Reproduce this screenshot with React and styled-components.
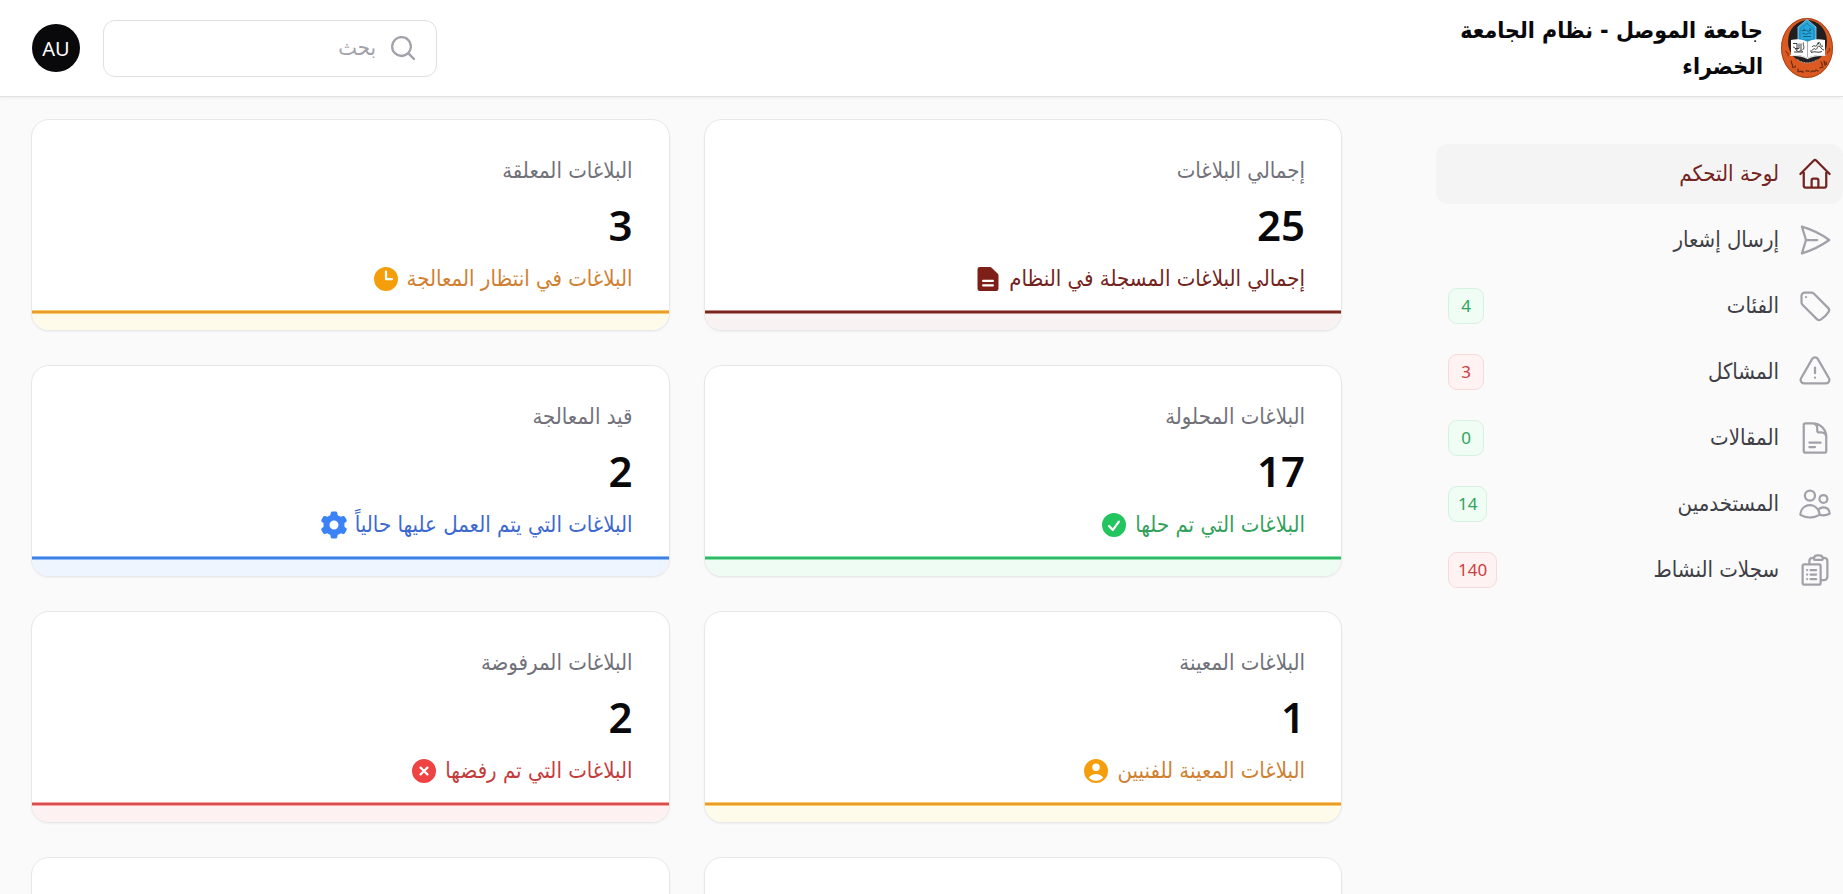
import styled, { createGlobalStyle } from "styled-components";
import {
  HiOutlineHome,
  HiOutlinePaperAirplane,
  HiOutlineTag,
  HiOutlineExclamationTriangle,
  HiOutlineDocumentText,
  HiOutlineUsers,
  HiOutlineClipboardDocumentList,
  HiMiniMagnifyingGlass,
  HiMiniDocumentText,
  HiMiniClock,
  HiMiniCheckCircle,
  HiMiniCog6Tooth,
  HiMiniUserCircle,
  HiMiniXCircle,
} from "react-icons/hi2";

const navItems = [
  { label: "لوحة التحكم", icon: HiOutlineHome, active: true },
  { label: "إرسال إشعار", icon: HiOutlinePaperAirplane },
  { label: "الفئات", icon: HiOutlineTag, count: 4, tone: "green" },
  { label: "المشاكل", icon: HiOutlineExclamationTriangle, count: 3, tone: "red" },
  { label: "المقالات", icon: HiOutlineDocumentText, count: 0, tone: "green" },
  { label: "المستخدمين", icon: HiOutlineUsers, count: 14, tone: "green" },
  { label: "سجلات النشاط", icon: HiOutlineClipboardDocumentList, count: 140, tone: "red" },
];

const stats = [
  { label: "إجمالي البلاغات", value: 25, note: "إجمالي البلاغات المسجلة في النظام", icon: HiMiniDocumentText, tone: "maroon" },
  { label: "البلاغات المعلقة", value: 3, note: "البلاغات في انتظار المعالجة", icon: HiMiniClock, tone: "amber" },
  { label: "البلاغات المحلولة", value: 17, note: "البلاغات التي تم حلها", icon: HiMiniCheckCircle, tone: "green" },
  { label: "قيد المعالجة", value: 2, note: "البلاغات التي يتم العمل عليها حالياً", icon: HiMiniCog6Tooth, tone: "blue" },
  { label: "البلاغات المعينة", value: 1, note: "البلاغات المعينة للفنيين", icon: HiMiniUserCircle, tone: "amber" },
  { label: "البلاغات المرفوضة", value: 2, note: "البلاغات التي تم رفضها", icon: HiMiniXCircle, tone: "red" },
];

const tones = {
  maroon: { text: "#742420", icon: "#7f2018", line: "#7a2420", edge: "#c08a86", fill: "#f8f2f2" },
  amber: { text: "#d08030", icon: "#f59e0b", line: "#e89c2c", edge: "#f9cb6c", fill: "#fffbeb" },
  green: { text: "#35a05c", icon: "#22c55e", line: "#35b566", edge: "#86e5aa", fill: "#effcf4" },
  blue: { text: "#3d68d0", icon: "#3b82f6", line: "#4280e0", edge: "#8cbcfb", fill: "#eff5ff" },
  red: { text: "#c43c3c", icon: "#ef4444", line: "#d65050", edge: "#f9a0a0", fill: "#fef1f1" },
};

const badgeTones = {
  green: { text: "#2fa35b", border: "#d5f2df", fill: "#f0fdf4" },
  red: { text: "#cc3d3d", border: "#f8dada", fill: "#fef2f2" },
};

const Logo = () => (
  <LogoSvg viewBox="0 0 52 60" role="img" aria-label="جامعة الموصل">
    <ellipse cx="26" cy="30" rx="26" ry="30" fill="#dc5a22" />
    <ellipse cx="26" cy="30" rx="25.5" ry="29.5" fill="none" stroke="#8a3a1c" strokeWidth="0.7" />
    <ellipse cx="26.5" cy="23.5" rx="19.5" ry="21.5" fill="#231f20" />
    <path d="M17 25V9l9-7.500 9 7.500v16z" fill="#2fa4d8" stroke="#8fd3ee" strokeWidth="0.8" />
    <path d="M19 22v-9c0-4 7-6 7-8 0 2 7 4 7 8v9z" fill="#25a8df" stroke="#14627f" strokeWidth="0.5" />
    <path d="M20.500 12.500c2 1 3-1 5 0s3 1 5-1M21 16c2-2 3 1 5 0s3-2 4 0M22 18.500h8M29 10v2.500M23 10.500v2" fill="none" stroke="#174b66" strokeWidth="0.8" />
    <path d="M10 22c6-1.500 12-1 16.500 2C31 21 37 20.500 44 22v15c-6-.500-13 .500-17.500 3C22 37.500 16 36.500 10 37z" fill="#fff" />
    <path d="M9 37.500c7-.500 13 .500 17.500 3 4.500-2.500 11-3.500 18-3" fill="none" stroke="#e6e6e6" strokeWidth="1.200" />
    <path d="M26.500 24v15" stroke="#777" strokeWidth="0.600" />
    <path d="M12 25.500h4v7M18 25.500v5h-4M20 25.500v7M22.500 24.500c-1 3 2 5-1 7.500M12 29.500c2-2 3 4 5 4s3-2 5 .500M13 34h9" fill="none" stroke="#3a3a3a" strokeWidth="1" />
    <path d="M29 33c3 1 3-4 5-2s2-3 4-3 2 4 5 4M31 29c2-3 4 1 5-2s2-3 3-2 0 4 3 3M30 34.500c4-2 7 1 11-1M37 24.500l1 2" fill="none" stroke="#3a3a3a" strokeWidth="1" />
    <path d="M16 41c5 5 15 5 21 0" fill="none" stroke="#aaa" strokeWidth="1" strokeDasharray="1 0.600" />
    <path d="M10.500 43c-1 3 2 3 1 6 1 1 3 0 3-1M17 51v2.500c1 1 2-1 3 0s2-2 2 1M25 53c1-1 2 1 3 0M30 54c2-3 3 1 4-1s2 0 3 0M39 50c1-2 2 1 3-1M40 44c1 2 2 2 1 4M43 43l1 4c1 0 2-1 1-3" fill="none" stroke="#6f2d15" strokeWidth="1.300" strokeLinecap="round" />
    <path d="M4.500 33c2 0 0 2 2 2s-1 2 1 3M46 35c2 0 0-2 2-2s-1-2 1-3" fill="none" stroke="#8a3517" strokeWidth="1.200" />
  </LogoSvg>
);

const App = () => {
  return (
    <>
      <GlobalStyle />
      <Page dir="rtl" lang="ar">
        <Header>
          <Brand href="#">
            <Logo />
            <BrandName>جامعة الموصل - نظام الجامعة الخضراء</BrandName>
          </Brand>
          <Tools>
            <SearchBox>
              <HiMiniMagnifyingGlass />
              <input type="search" placeholder="بحث" aria-label="بحث" />
            </SearchBox>
            <Avatar type="button">AU</Avatar>
          </Tools>
        </Header>
        <Body>
          <Sidebar>
            {navItems.map(({ label, icon: Icon, active, count, tone }) => (
              <NavLink href="#" key={label} $active={active}>
                <Icon />
                <span>{label}</span>
                {tone && <Badge $tone={badgeTones[tone]}>{count}</Badge>}
              </NavLink>
            ))}
          </Sidebar>
          <Main>
            {stats.map(({ label, value, note, icon: Icon, tone }) => (
              <Card key={label}>
                <CardBody>
                  <CardLabel>{label}</CardLabel>
                  <CardValue>{value}</CardValue>
                  <CardNote $tone={tones[tone]}>
                    <span>{note}</span>
                    <Icon />
                  </CardNote>
                </CardBody>
                <Trend $tone={tones[tone]} />
              </Card>
            ))}
            <Card />
            <Card />
          </Main>
        </Body>
      </Page>
    </>
  );
};

const GlobalStyle = createGlobalStyle`
  *, *::before, *::after {
    box-sizing: border-box;
  }

  body {
    margin: 0;
    background: #fafafa;
    color: #09090b;
    font-family: "DejaVu Sans Condensed", "DejaVu Sans", sans-serif;
  }
`;

const Page = styled.div`
  display: flex;
  flex-direction: column;
  height: 100vh;
  overflow: hidden;
`;

const Header = styled.header`
  display: flex;
  flex-shrink: 0;
  align-items: center;
  justify-content: space-between;
  min-height: 97px;
  padding: 0 10px 0 32px;
  background: #fff;
  border-bottom: 1px solid #e2e2e3;
  box-shadow: 0 1px 3px rgba(0, 0, 0, 0.06);
`;

const Brand = styled.a`
  display: flex;
  align-items: center;
  gap: 18px;
  color: #09090b;
  text-decoration: none;
`;

const LogoSvg = styled.svg`
  width: 52px;
  height: 60px;
  flex-shrink: 0;
`;

const BrandName = styled.span`
  max-width: 320px;
  font-size: 23px;
  font-weight: 700;
  line-height: 36px;
`;

const Tools = styled.div`
  display: flex;
  align-items: center;
  gap: 23px;
`;

const SearchBox = styled.label`
  display: flex;
  align-items: center;
  gap: 12px;
  width: 334px;
  height: 57px;
  padding: 0 18px;
  background: #fff;
  border: 1px solid #e0e0e2;
  border-radius: 12px;

  svg {
    width: 30px;
    height: 30px;
    flex-shrink: 0;
    color: #a1a1aa;
  }

  input {
    flex: 1;
    min-width: 0;
    padding: 0;
    border: 0;
    outline: none;
    background: transparent;
    font-family: inherit;
    font-size: 22px;
    line-height: 30px;

    &::placeholder {
      color: #a1a1aa;
      opacity: 1;
    }
  }
`;

const Avatar = styled.button`
  width: 48px;
  height: 48px;
  padding: 0;
  border: 0;
  border-radius: 50%;
  background: #09090b;
  color: #fff;
  font-family: "Noto Sans", sans-serif;
  font-size: 20px;
`;

const Body = styled.div`
  display: flex;
  flex: 1;
  min-height: 0;
`;

const Sidebar = styled.nav`
  display: flex;
  flex-direction: column;
  flex: 0 0 407px;
  gap: 6px;
  padding-top: 47px;
`;

const NavLink = styled.a`
  display: flex;
  align-items: center;
  gap: 18px;
  height: 60px;
  padding: 0 10px 0 12px;
  border-radius: 12px;
  background: ${({ $active }) => ($active ? "#f4f4f4" : "transparent")};
  color: ${({ $active }) => ($active ? "#742420" : "#3f3f46")};
  font-size: 22px;
  line-height: 30px;
  text-decoration: none;

  span {
    flex: 1;
  }

  svg {
    width: 36px;
    height: 36px;
    color: ${({ $active }) => ($active ? "#742420" : "#a1a1aa")};
  }
`;

const Badge = styled.strong`
  min-width: 36px;
  height: 36px;
  padding: 0 9px;
  border: 1px solid ${({ $tone }) => $tone.border};
  border-radius: 9px;
  background: ${({ $tone }) => $tone.fill};
  color: ${({ $tone }) => $tone.text};
  font-family: "Noto Sans", sans-serif;
  font-size: 17px;
  font-weight: 400;
  line-height: 34px;
  text-align: center;
`;

const Main = styled.main`
  display: grid;
  flex: 1;
  grid-template-columns: repeat(2, minmax(0, 1fr));
  grid-auto-rows: max-content;
  gap: 34px;
  padding: 22px 94px 0 31px;
  overflow: hidden;
`;

const Card = styled.section`
  display: flex;
  flex-direction: column;
  min-height: 212px;
  overflow: hidden;
  background: #fff;
  border: 1px solid #e8e8e9;
  border-radius: 18px;
  box-shadow: 0 1px 2px rgba(0, 0, 0, 0.05);
`;

const CardBody = styled.div`
  display: flex;
  flex-direction: column;
  gap: 12px;
  padding: 36px 36px 16px;
`;

const CardLabel = styled.div`
  color: #71717a;
  font-size: 22px;
  line-height: 30px;
`;

const CardValue = styled.div`
  font-family: "Noto Sans", sans-serif;
  font-size: 42px;
  font-weight: 600;
  line-height: 54px;
`;

const CardNote = styled.div`
  display: flex;
  align-items: center;
  gap: 6px;
  color: ${({ $tone }) => $tone.text};
  font-size: 22px;
  line-height: 30px;

  svg {
    width: 30px;
    height: 30px;
    color: ${({ $tone }) => $tone.icon};
  }
`;

const Trend = styled.div`
  height: 20px;
  background: ${({ $tone }) => $tone.fill};
  border-top: 1px solid ${({ $tone }) => $tone.edge};

  &::before {
    content: "";
    display: block;
    height: 3px;
    background: ${({ $tone }) => $tone.line};
    border-bottom: 1px solid ${({ $tone }) => $tone.edge};
  }
`;

export default App;
